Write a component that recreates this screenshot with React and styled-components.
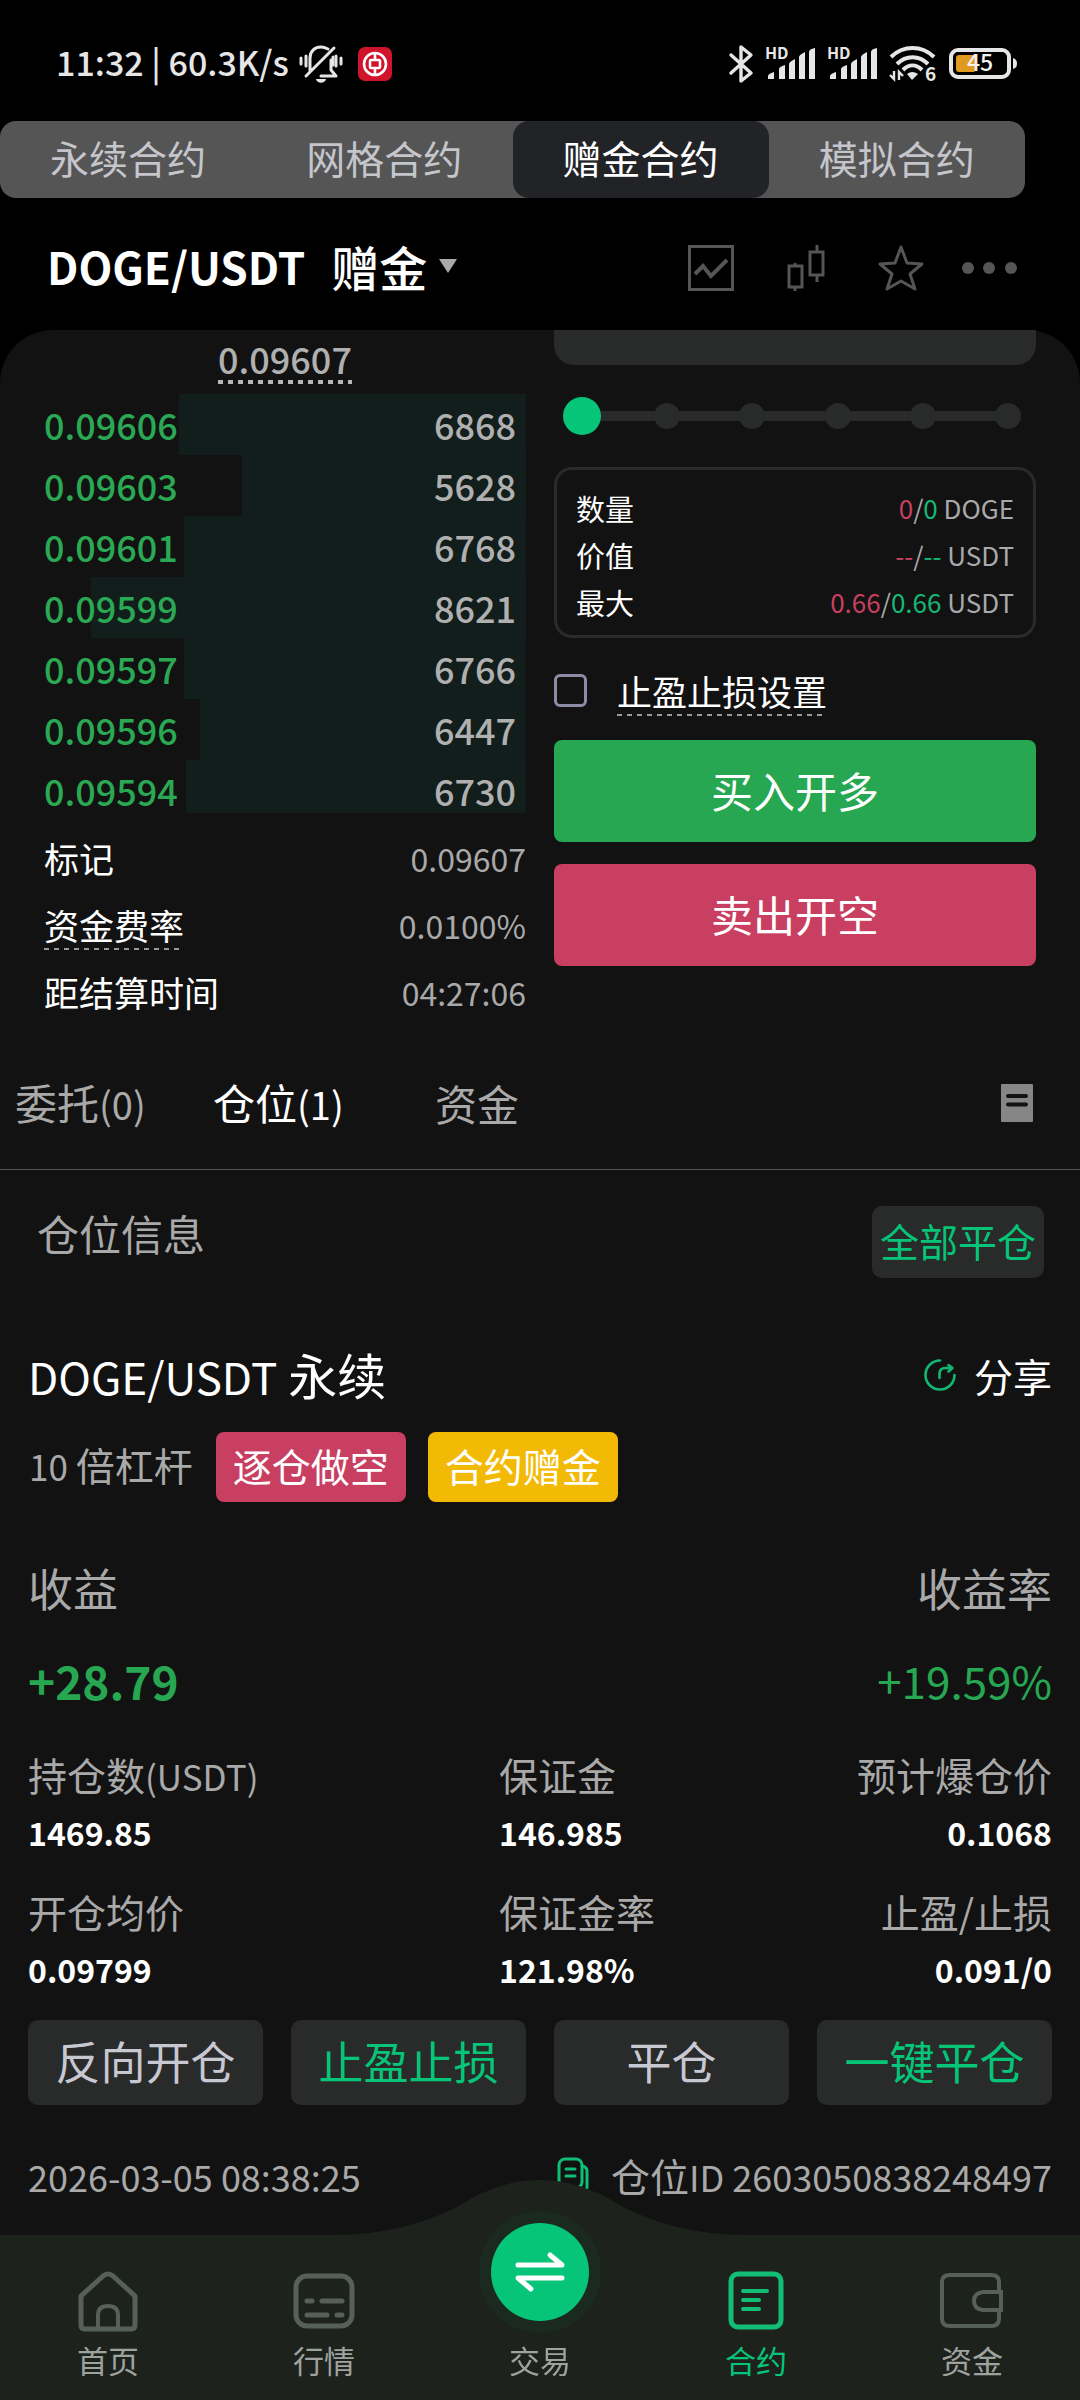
import React, { useState } from 'react'
import styled, { createGlobalStyle } from 'styled-components'

const GlobalStyle = createGlobalStyle`
  * {
    box-sizing: border-box;
  }

  body {
    margin: 0;
    background: #000;
    color: #fff;
    font-family: 'Noto Sans CJK SC', 'Noto Sans', sans-serif;
  }

  button, input {
    margin: 0;
    padding: 0;
    border: 0;
    background: none;
    color: inherit;
    font: inherit;
  }

  h1, h2, h3, dl, dd, ul, p {
    margin: 0;
    padding: 0;
    font-weight: 400;
  }

  ul {
    list-style: none;
  }

  svg {
    display: block;
    flex: none;
    overflow: visible;
  }
`

const Page = styled.div`
  display: flex;
  flex-direction: column;
  min-height: 100vh;
`

/* ---- status bar ---- */

const StatusBar = styled.div`
  display: flex;
  align-items: center;
  justify-content: space-between;
  height: 121px;
  padding: 6px 63px 0 56px;
  color: #e6e6e6;
`

const StatusGroup = styled.div`
  display: flex;
  align-items: center;
  gap: ${p => p.$gap}px;
`

const Clock = styled.span`
  font-size: 34px;
  font-weight: 500;
  line-height: 50px;
  padding-bottom: 4px;
`

/* ---- contract type switch ---- */

const TypeTabs = styled.nav`
  display: grid;
  grid-template-columns: repeat(4, 1fr);
  height: 77px;
  margin-right: 55px;
  border-radius: 16px;
  background: #555;
`

const TypeTab = styled.button`
  padding-bottom: 6px;
  border-radius: 16px;
  background: ${p => (p.$active ? '#222327' : 'transparent')};
  color: ${p => (p.$active ? '#fff' : '#c5c5cc')};
  font-size: 39px;
  line-height: 50px;
`

/* ---- pair header ---- */

const Header = styled.header`
  display: flex;
  align-items: center;
  justify-content: space-between;
  height: 132px;
  padding: 8px 63px 0 47px;
`

const PairButton = styled.button`
  display: flex;
  align-items: center;
  padding-bottom: 4px;
  font-size: 48px;
  font-weight: 500;
  line-height: 64px;
`

const PairName = styled.span`
  margin-right: 26px;
  font-size: 44px;
  font-weight: 700;
`

const Caret = styled.span`
  margin-left: 12px;
  border: 9px solid transparent;
  border-top: 14px solid #aaa;
  border-bottom: 0;
`

const Tools = styled.div`
  display: flex;
  align-items: center;
  color: #555;
  gap: 53px;

  button:last-child {
    margin-left: -16px;
  }
`

/* ---- trading panel ---- */

const Panel = styled.main`
  flex: 1;
  padding-bottom: 193px;
  border-radius: 53px 53px 0 0;
  background: #121212;
`

const Trade = styled.section`
  display: grid;
  grid-template-columns: 1fr 1fr;
  gap: 28px;
  padding: 0 44px;
`

const dashes = (color, height) => `
  background: linear-gradient(to right, ${color} 50%, transparent 0) left bottom / 10px ${height}px repeat-x;
`

const LastPrice = styled.p`
  height: 64px;
  text-align: center;

  span {
    display: inline-block;
    height: 54px;
    padding-top: 4px;
    color: #b0b0b0;
    font-size: 36px;
    font-weight: 500;
    line-height: 48px;
    ${dashes('#b8b8b8', 4)}
  }
`

const BookRow = styled.li`
  display: flex;
  justify-content: space-between;
  height: 61px;
  padding-right: 10px;
  background: linear-gradient(#121e1c, #121e1c) right top no-repeat;
  color: #b0b0b0;
  font-size: 36px;
  font-weight: 500;
  line-height: 60px;

  &:last-child {
    height: 53px;
  }
`

const BidPrice = styled.span`
  color: #2aa853;
`

const Marks = styled.dl`
  margin-top: 11px;
`

const MarkRow = styled.div`
  display: flex;
  align-items: center;
  justify-content: space-between;
  height: 67px;

  dt {
    font-size: 35px;
    line-height: 50px;
    ${p => p.$dashed && dashes('#9a9a9a', 2)}
  }

  dd {
    color: #a9a9a9;
    font-size: 32px;
  }
`

const OrderForm = styled.form`
  display: flex;
  flex-direction: column;
`

const FieldEdge = styled.div`
  height: 35px;
  border-radius: 0 0 20px 20px;
  background: #292a2a;
`

const SliderBox = styled.div`
  display: grid;
  align-items: center;
  height: 38px;
  margin: 32px 9px;

  > * {
    grid-area: 1 / 1;
  }
`

const Stops = styled.div`
  display: flex;
  justify-content: space-between;
  padding: 0 6px;
  background: linear-gradient(#292a2a, #292a2a) center / calc(100% - 38px) 10px no-repeat;

  span {
    width: 26px;
    height: 26px;
    border-radius: 50%;
    background: #292a2a;
  }
`

const Range = styled.input`
  appearance: none;
  width: 100%;
  height: 38px;

  &::-webkit-slider-thumb {
    appearance: none;
    width: 38px;
    height: 38px;
    border-radius: 50%;
    background: #06c478;
  }
`

const Limits = styled.dl`
  padding: 14px 19px 10px;
  border: 3px solid #2a2a2a;
  border-radius: 18px;

  div {
    display: flex;
    align-items: center;
    justify-content: space-between;
    height: 47px;
  }

  dt {
    font-size: 29px;
  }

  dd {
    color: #a9a9a9;
    font-size: 26px;
  }
`

const Short = styled.span`
  color: #c83f62;
`

const Long = styled.span`
  color: #16b877;
`

const StopLabel = styled.label`
  display: flex;
  align-items: center;
  gap: 30px;
  height: 102px;
  padding-top: 3px;
  font-size: 35px;

  input {
    appearance: none;
    width: 33px;
    height: 33px;
    border: 3px solid #8c8ca6;
    border-radius: 6px;
  }

  input:checked {
    background: #06c478;
  }

  span {
    line-height: 50px;
    ${dashes('#9a9a9a', 2)}
  }
`

const OrderButton = styled.button`
  height: 102px;
  padding-bottom: 4px;
  border-radius: 8px;
  background: ${p => (p.$side === 'long' ? '#27a751' : '#c83f62')};
  font-size: 42px;

  & + & {
    margin-top: 22px;
  }
`

/* ---- orders / positions ---- */

const ListTabs = styled.nav`
  display: grid;
  grid-template-columns: 198px 222px auto 1fr;
  align-items: center;
  height: 145px;
  padding: 12px 47px 0 15px;
  border-bottom: 1px solid #555;
`

const ListTab = styled.button`
  color: ${p => (p.$active ? '#fff' : '#a9a9a9')};
  font-size: 42px;
  line-height: 60px;
  text-align: left;
`

const HistoryButton = styled.button`
  justify-self: end;
`

// latin runs sit a little smaller than the chinese text beside them
const Latin = styled.span`
  font-size: ${p => p.$size}px;
`

const SectionHead = styled.div`
  display: flex;
  align-items: flex-start;
  justify-content: space-between;
  padding: 36px 36px 0 37px;

  h2 {
    color: #a9a9a9;
    font-size: 42px;
    line-height: 54px;
  }
`

const CloseAll = styled.button`
  height: 72px;
  padding: 0 8px 4px;
  border-radius: 10px;
  background: #292a2a;
  color: #06c478;
  font-size: 39px;
`

const Position = styled.article`
  padding: 60px 28px 0;
`

const Row = styled.div`
  display: flex;
  align-items: center;
  justify-content: space-between;
`

const PositionTitle = styled.h3`
  font-size: 49px;
  line-height: 72px;
`

const Share = styled.button`
  display: flex;
  align-items: center;
  gap: 18px;
  font-size: 39px;
`

const Tags = styled.div`
  display: flex;
  align-items: center;
  gap: 22px;
  margin-top: 19px;
  color: #a9a9a9;
  font-size: 39px;
  line-height: 66px;
`

const Leverage = styled.span`
  padding: 0 1px 4px;
`

const Tag = styled.span`
  padding: 0 17px 4px;
  border-radius: 8px;
  background: ${p => p.$color};
  color: #fff;
`

const ProfitLabels = styled(Row)`
  margin-top: 55px;
  color: #a9a9a9;
  font-size: 45px;
  line-height: 60px;
`

const Profit = styled(Row)`
  margin-top: 31px;
  color: #27a751;
  font-size: 44px;
  line-height: 62px;

  strong {
    font-size: 46px;
    font-weight: 700;
  }
`

const Stats = styled.dl`
  display: grid;
  grid-template-columns: 46% 27% 27%;
  row-gap: 25px;
  margin-top: 36px;

  div:nth-child(3n) {
    text-align: right;
  }

  dt {
    height: 56px;
    color: #a9a9a9;
    font-size: 39px;
    line-height: 54px;
  }

  dd {
    height: 56px;
    font-size: 32px;
    font-weight: 700;
    line-height: 58px;
  }
`

const Actions = styled.div`
  display: grid;
  grid-template-columns: repeat(4, 1fr);
  gap: 28px;
  margin-top: 24px;
`

const Action = styled.button`
  height: 85px;
  padding-bottom: 4px;
  border-radius: 10px;
  background: #292a2a;
  color: ${p => (p.$green ? '#06c478' : '#c8c8d2')};
  font-size: 45px;
  line-height: 60px;
`

const PositionFoot = styled(Row)`
  margin-top: 40px;
  color: #a9a9a9;
  font-size: 36px;
  line-height: 60px;
`

const PositionId = styled.span`
  display: flex;
  align-items: center;
  gap: 22px;
  font-size: 39px;
`

/* ---- bottom navigation, floats over the page ---- */

const BottomNav = styled.nav`
  position: fixed;
  right: 0;
  bottom: 0;
  left: 0;
  display: flex;
  align-items: flex-end;
  height: 165px;
  padding-bottom: 20px;
  background: #1d221d;
`

const Bump = styled.svg`
  position: absolute;
  bottom: 100%;
  left: 50%;
  margin-left: -210px;
`

const NavItem = styled.a`
  position: relative;
  display: flex;
  flex: 1;
  flex-direction: column;
  align-items: center;
  gap: 7px;
  color: ${p => (p.$active ? '#06c478' : '#9ea39f')};
  font-size: 31px;
  line-height: 40px;
  text-decoration: none;

  svg {
    color: ${p => (p.$active ? '#12bd76' : '#566058')};
  }
`

const Exchange = styled.span`
  display: grid;
  place-items: center;
  width: 98px;
  height: 98px;
  margin-bottom: 12px;
  border-radius: 50%;
  background: #06c478;
  box-shadow: 0 0 0 12px #1b2a1e;
`

const BellOff = () => (
  <svg width="44" height="38" viewBox="0 0 44 38" fill="none" stroke="currentColor" strokeWidth="3" strokeLinecap="round" strokeLinejoin="round">
    <path d="M2 13v6M7 11v10M37 11v10M42 13v6" />
    <path d="M11 26V13c0-7 5-11 11-11 3 0 5 1 7 2M34 12v8M22 31h15l-5-6V15M7 31 35 3" />
    <path d="M17 34h10c-1 5-9 5-10 0z" fill="currentColor" stroke="none" />
  </svg>
)

const BankIcon = () => (
  <svg width="34" height="34" viewBox="0 0 34 34" fill="none" stroke="#fff">
    <rect width="34" height="34" rx="7" fill="#d0142c" stroke="none" />
    <circle cx="17" cy="17" r="11" strokeWidth="2.6" />
    <rect x="12" y="13" width="10" height="8" rx="1" strokeWidth="2.6" />
    <path d="M17 5v8M17 21v8" strokeWidth="2.6" />
  </svg>
)

const Bluetooth = () => (
  <svg width="24" height="38" viewBox="0 0 24 38" fill="none" stroke="currentColor" strokeWidth="3.4" strokeLinecap="round" strokeLinejoin="round">
    <path d="M2 10 22 28 12 36V2l10 8L2 28" />
  </svg>
)

const Signal = () => (
  <svg width="50" height="33" viewBox="0 0 50 33" fill="currentColor">
    <path d="M3 32v-3q0-2 6-4v7zM14 32V22q0-2 6-4v14zM24 32V17q0-2 6-5v20zM34 32V10q0-2 6-5v27zM44 32V5q0-3 6-4v31z" />
    <text x="0" y="12" fontSize="16" fontWeight="700">HD</text>
  </svg>
)

const Wifi = () => (
  <svg width="48" height="37" viewBox="0 0 48 37" fill="none" stroke="currentColor" strokeWidth="4">
    <path d="M2 12c12-12 31-12 43 0M8 19c9-9 22-9 31 0M14 25c6-6 13-6 19 0" />
    <path d="M18 29q5-4 11 0l-6 6z" fill="currentColor" stroke="none" />
    <path d="M5 26v8l-4-4M10 35v-8l4 4" strokeWidth="2.4" />
    <text x="36" y="36" fontSize="19" fontWeight="700" fill="currentColor" stroke="none">6</text>
  </svg>
)

const Battery = () => (
  <svg width="68" height="31" viewBox="0 0 68 31">
    <rect x="2" y="2" width="58" height="27" rx="7" fill="none" stroke="currentColor" strokeWidth="4" />
    <rect x="7" y="7" width="20" height="17" rx="3" fill="#e09a20" />
    <path d="M64 10q4 1 4 5.500t-4 5.500z" fill="currentColor" />
    <text x="31" y="23" textAnchor="middle" fontSize="23" fontWeight="500" fill="#f2f2f2">45</text>
  </svg>
)

const ChartIcon = () => (
  <svg width="46" height="46" viewBox="0 0 46 46" fill="none" stroke="currentColor" strokeWidth="3">
    <rect x="1.500" y="1.500" width="43" height="43" />
    <path d="M7 29l8-8 8 10 16-16" strokeWidth="4" />
  </svg>
)

const CandlesIcon = () => (
  <svg width="38" height="46" viewBox="0 0 38 46" fill="none" stroke="currentColor" strokeWidth="3">
    <path d="M8 18v4M8 43v3M30 0v6M30 31v6" />
    <rect x="2" y="21" width="13" height="21" />
    <rect x="23" y="7" width="13" height="23" />
  </svg>
)

const StarIcon = () => (
  <svg width="46" height="46" viewBox="0 0 46 46" fill="none" stroke="currentColor" strokeWidth="3" strokeLinejoin="round">
    <path d="M23 2l6 16 15 1-12 10 5 15-14-8-14 8 5-15L2 19l15-1z" />
  </svg>
)

const MoreIcon = () => (
  <svg width="56" height="14" viewBox="0 0 56 14" fill="currentColor">
    <circle cx="7" cy="7" r="6" />
    <circle cx="28" cy="7" r="6" />
    <circle cx="50" cy="7" r="6" />
  </svg>
)

const HistoryIcon = () => (
  <svg width="32" height="38" viewBox="0 0 32 38">
    <rect width="32" height="38" rx="1" fill="#868686" />
    <path d="M7 12h18M7 20.500h18" stroke="#121212" strokeWidth="4" strokeLinecap="round" />
  </svg>
)

const ShareIcon = () => (
  <svg width="32" height="32" viewBox="0 0 32 32" fill="none" stroke="#0fb873" strokeWidth="2.600" strokeLinecap="round" strokeLinejoin="round">
    <path d="M16 1.500A14.500 14.500 0 1 0 30.500 16" />
    <path d="M15.500 19v-4q0-6 6-6h6M24.500 6l4 3-4 3.500" />
  </svg>
)

const CopyIcon = () => (
  <svg width="32" height="38" viewBox="0 0 32 38" fill="none" stroke="#0fbd76" strokeWidth="3" strokeLinecap="round">
    <rect x="2" y="2" width="23" height="29" rx="6" />
    <path d="M25 9q5 1 5 5v16q0 6-6 6H10M9 12h9M9 19h9" />
  </svg>
)

const HomeIcon = () => (
  <svg width="62" height="62" viewBox="0 0 62 62" fill="none" stroke="currentColor" strokeWidth="5" strokeLinejoin="round">
    <path d="M4 25 26 5q5-4 10 0l22 20v29q0 4-4 4H8q-4 0-4-4z" />
    <path d="M21 58V44q0-9 10-9t10 9v14" strokeWidth="4" />
  </svg>
)

const MarketIcon = () => (
  <svg width="62" height="62" viewBox="0 0 62 62" fill="none" stroke="currentColor" strokeWidth="5" strokeLinecap="round">
    <rect x="3" y="5" width="56" height="50" rx="11" />
    <path d="M14 30h5M29 30h20M14 44h20M44 44h5" />
  </svg>
)

const ContractIcon = () => (
  <svg width="62" height="62" viewBox="0 0 62 62" fill="none" stroke="currentColor" strokeWidth="5" strokeLinecap="round">
    <rect x="6" y="3" width="50" height="53" rx="7" />
    <path d="M18 20h24M18 29h16M18 38h16" strokeWidth="4" />
  </svg>
)

const WalletIcon = () => (
  <svg width="64" height="62" viewBox="0 0 64 62" fill="none" stroke="currentColor" strokeWidth="4">
    <path d="M59 20V11q0-7-8-7H10q-8 0-8 7v37q0 7 8 7h41q8 0 8-7v-8" />
    <path d="M63 21H43q-9 1-9 9t9 9h20" />
    <path d="M61 20v20" />
  </svg>
)

const ExchangeIcon = () => (
  <svg width="52" height="42" viewBox="0 0 52 42" fill="none" stroke="#fff" strokeWidth="5" strokeLinecap="round" strokeLinejoin="round">
    <path d="M4 14h44L36 4M48 27H4l13 11" />
  </svg>
)

const types = ['永续合约', '网格合约', '赠金合约', '模拟合约']

const bids = [
  ['0.09606', 6868],
  ['0.09603', 5628],
  ['0.09601', 6768],
  ['0.09599', 8621],
  ['0.09597', 6766],
  ['0.09596', 6447],
  ['0.09594', 6730]
]

const DEPTH_MAX = 9544

const stats = [
  { label: <>持仓数<Latin $size={35}>(USDT)</Latin></>, value: '1469.85' },
  { label: '保证金', value: '146.985' },
  { label: '预计爆仓价', value: '0.1068' },
  { label: '开仓均价', value: '0.09799' },
  { label: '保证金率', value: '121.98%' },
  { label: '止盈/止损', value: '0.091/0' }
]

const navItems = [
  { label: '首页', icon: <HomeIcon /> },
  { label: '行情', icon: <MarketIcon /> },
  { label: '交易', icon: <Exchange><ExchangeIcon /></Exchange> },
  { label: '合约', icon: <ContractIcon />, active: true },
  { label: '资金', icon: <WalletIcon /> }
]

const App = () => {
  const [type, setType] = useState('赠金合约')
  const [percent, setPercent] = useState(0)

  return (
    <Page>
      <GlobalStyle />

      <StatusBar>
        <StatusGroup $gap={15}>
          <StatusGroup $gap={10}>
            <Clock>11:32 | 60.3K/s</Clock>
            <BellOff />
          </StatusGroup>
          <BankIcon />
        </StatusGroup>
        <StatusGroup $gap={12}>
          <Bluetooth />
          <Signal />
          <Signal />
          <Wifi />
          <Battery />
        </StatusGroup>
      </StatusBar>

      <TypeTabs>
        {types.map(name => (
          <TypeTab key={name} $active={name === type} onClick={() => setType(name)}>{name}</TypeTab>
        ))}
      </TypeTabs>

      <Header>
        <PairButton>
          <PairName>DOGE/USDT</PairName>
          赠金
          <Caret />
        </PairButton>
        <Tools>
          <button aria-label="分时图"><ChartIcon /></button>
          <button aria-label="K线"><CandlesIcon /></button>
          <button aria-label="收藏"><StarIcon /></button>
          <button aria-label="更多"><MoreIcon /></button>
        </Tools>
      </Header>

      <Panel>
        <Trade>
          <div>
            <LastPrice><span>0.09607</span></LastPrice>
            <ul>
              {bids.map(([price, qty]) => (
                <BookRow key={price} style={{ backgroundSize: `${(qty / DEPTH_MAX) * 100}% 100%` }}>
                  <BidPrice>{price}</BidPrice>
                  <span>{qty}</span>
                </BookRow>
              ))}
            </ul>
            <Marks>
              <MarkRow><dt>标记</dt><dd>0.09607</dd></MarkRow>
              <MarkRow $dashed><dt>资金费率</dt><dd>0.0100%</dd></MarkRow>
              <MarkRow><dt>距结算时间</dt><dd>04:27:06</dd></MarkRow>
            </Marks>
          </div>

          <OrderForm onSubmit={e => e.preventDefault()}>
            <FieldEdge />
            <SliderBox>
              <Stops>
                <span /><span /><span /><span /><span /><span />
              </Stops>
              <Range
                type="range"
                aria-label="仓位比例"
                min="0"
                max="100"
                step="20"
                value={percent}
                onChange={e => setPercent(Number(e.target.value))}
              />
            </SliderBox>
            <Limits>
              <div><dt>数量</dt><dd><Short>0</Short>/<Long>0</Long> DOGE</dd></div>
              <div><dt>价值</dt><dd><Short>--</Short>/<Long>--</Long> USDT</dd></div>
              <div><dt>最大</dt><dd><Short>0.66</Short>/<Long>0.66</Long> USDT</dd></div>
            </Limits>
            <StopLabel>
              <input type="checkbox" />
              <span>止盈止损设置</span>
            </StopLabel>
            <OrderButton $side="long">买入开多</OrderButton>
            <OrderButton $side="short">卖出开空</OrderButton>
          </OrderForm>
        </Trade>

        <ListTabs>
          <ListTab>委托<Latin $size={38}>(0)</Latin></ListTab>
          <ListTab $active>仓位<Latin $size={38}>(1)</Latin></ListTab>
          <ListTab>资金</ListTab>
          <HistoryButton aria-label="历史记录"><HistoryIcon /></HistoryButton>
        </ListTabs>

        <SectionHead>
          <h2>仓位信息</h2>
          <CloseAll>全部平仓</CloseAll>
        </SectionHead>

        <Position>
          <Row>
            <PositionTitle><Latin $size={44}>DOGE/USDT</Latin> 永续</PositionTitle>
            <Share><ShareIcon />分享</Share>
          </Row>
          <Tags>
            <Leverage><Latin $size={35}>10 </Latin>倍杠杆</Leverage>
            <Tag $color="#c83f62">逐仓做空</Tag>
            <Tag $color="#f3ba05">合约赠金</Tag>
          </Tags>

          <ProfitLabels><span>收益</span><span>收益率</span></ProfitLabels>
          <Profit><strong>+28.79</strong><span>+19.59%</span></Profit>

          <Stats>
            {stats.map(({ label, value }) => (
              <div key={value}>
                <dt>{label}</dt>
                <dd>{value}</dd>
              </div>
            ))}
          </Stats>

          <Actions>
            <Action>反向开仓</Action>
            <Action $green>止盈止损</Action>
            <Action>平仓</Action>
            <Action $green>一键平仓</Action>
          </Actions>

          <PositionFoot>
            <time>2026-03-05 08:38:25</time>
            <PositionId>
              <CopyIcon />
              <span>仓位<Latin $size={36}>ID 2603050838248497</Latin></span>
            </PositionId>
          </PositionFoot>
        </Position>
      </Panel>

      <BottomNav>
        <Bump width="420" height="55" viewBox="0 0 420 55" fill="#1d221d">
          <path d="M0 55C60 55 95 42 125 28 150 13 175 0 210 0s60 13 85 28c30 14 65 27 125 27z" />
        </Bump>
        {navItems.map(({ label, icon, active }) => (
          <NavItem key={label} href="#" $active={active}>
            {icon}
            {label}
          </NavItem>
        ))}
      </BottomNav>
    </Page>
  )
}

export default App
